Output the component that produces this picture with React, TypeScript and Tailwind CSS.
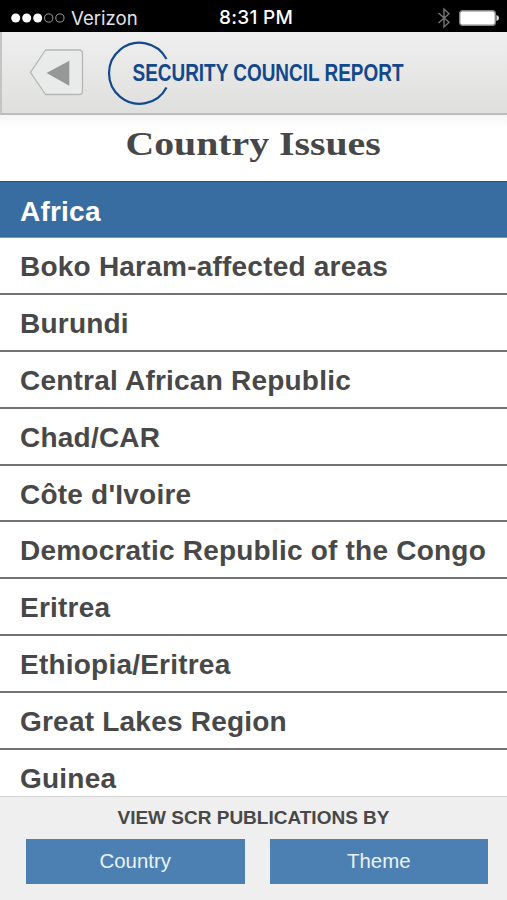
const countries = [
  "Boko Haram-affected areas",
  "Burundi",
  "Central African Republic",
  "Chad/CAR",
  "Côte d'Ivoire",
  "Democratic Republic of the Congo",
  "Eritrea",
  "Ethiopia/Eritrea",
  "Great Lakes Region",
  "Guinea",
];

function StatusBar() {
  return (
    <div className="grid h-8 shrink-0 grid-cols-[1fr_auto_1fr] items-center bg-black pt-[3px] pr-[8px] pl-[11px] text-[18.6px] leading-[30px] text-[#e4e4e4]">
      <div className="flex items-center">
        <svg width="54" height="10" viewBox="0 0 54 10" className="mr-[6px]">
          <circle cx="4.7" cy="5" r="4.5" fill="#fff" />
          <circle cx="15.7" cy="5" r="4.5" fill="#fff" />
          <circle cx="26.7" cy="5" r="4.5" fill="#fff" />
          <circle cx="37.7" cy="5" r="4.1" fill="none" stroke="#aaa" strokeWidth="0.9" />
          <circle cx="48.9" cy="5" r="4.1" fill="none" stroke="#aaa" strokeWidth="0.9" />
        </svg>
        <span>Verizon</span>
      </div>
      <span className="pl-[2px] text-[19px] font-medium tracking-[0.3px] text-white">8:31 PM</span>
      <div className="flex items-center justify-end">
        <svg width="14" height="22" viewBox="0 0 14 22" className="mr-[8px]">
          <path d="M1.5 6 L12 15.3 L7 20 V2 L12 6.7 L1.5 16" fill="none" stroke="#777" strokeWidth="1.4" />
        </svg>
        <svg width="40" height="16" viewBox="0 0 40 16">
          <rect x="0.7" y="0.7" width="35.6" height="14.6" rx="2.8" fill="#fff" stroke="#858585" strokeWidth="1.4" />
          <path d="M37.4 5 Q40 5.5 40 8 Q40 10.5 37.4 11 Z" fill="#ddd" />
        </svg>
      </div>
    </div>
  );
}

function Header() {
  return (
    <header className="flex h-[83px] shrink-0 items-center border-b-2 border-l-2 border-b-[#bdbdbc] border-l-[#c4c4c4] bg-linear-to-b from-[#efefef] to-[#dfdfde] pl-[26px]">
      <button aria-label="Back">
        <svg width="56" height="50" viewBox="0 0 56 50">
          <path
            d="M17.5 2 H51 Q54.5 2 54.5 5.5 V43 Q54.5 46.5 51 46.5 H17.5 L2.5 24.3 Z"
            fill="#e9ebeb"
            stroke="#b5b6b6"
            strokeWidth="1.3"
            strokeLinejoin="round"
          />
          <path d="M18.5 25 L41.3 12.7 V37.7 Z" fill="#969897" />
        </svg>
      </button>
      <svg width="320" height="66" viewBox="0 0 320 66" className="ml-[23px] overflow-visible">
        <path d="M59.5 19 A30.5 30.5 0 1 0 59.5 47.5" fill="none" stroke="#13488b" strokeWidth="2.2" />
        <text
          x="25.5"
          y="41.3"
          textLength="271"
          lengthAdjust="spacingAndGlyphs"
          fontFamily="'Liberation Sans', Arial, sans-serif"
          fontSize="24.5"
          fontWeight="700"
          fill="#13488b"
        >
          SECURITY COUNCIL REPORT
        </text>
      </svg>
    </header>
  );
}

export default function App() {
  return (
    <div className="flex h-[900px] w-[507px] flex-col overflow-hidden bg-white font-['Liberation_Sans',Arial,sans-serif]">
      <div className="font-[Inter,sans-serif]">
        <StatusBar />
      </div>
      <Header />
      <h1 className="flex h-[66px] shrink-0 justify-center bg-linear-to-b from-[#f5f5f5] to-white to-20% pt-[9px] font-['Liberation_Serif',serif] text-[34px] leading-[40px] font-bold text-[#474747]">
        <span className="inline-block scale-x-[1.17]">Country Issues</span>
      </h1>

      <main className="min-h-0 flex-1 overflow-hidden text-[28px] leading-[54px] font-bold tracking-[0.22px] text-[#484848]">
        <h2 className="h-[57px] border-t-[1.5px] border-b border-t-[#444d55] border-b-[#7797bb] bg-[#386da1] pt-[3px] pl-5 text-white">
          Africa
        </h2>
        <ul>
          {countries.map((name) => (
            <li key={name} className="h-[56.9px] border-b-2 border-[#737373] pt-[2px] pl-5">
              {name}
            </li>
          ))}
        </ul>
      </main>

      <footer className="h-[104px] shrink-0 border-t border-[#d2d2d2] bg-[#efefef] pr-[19px] pl-[26px]">
        <p className="pt-[10px] pr-[7px] text-center text-[19px] leading-[22px] font-bold text-[#484848]">
          VIEW SCR PUBLICATIONS BY
        </p>
        <div className="mt-[10px] grid grid-cols-2 gap-[25px] text-[20.4px] text-[#eaf3fc]">
          <button className="h-[45px] bg-[#4c80b3]">Country</button>
          <button className="h-[45px] bg-[#4c80b3]">Theme</button>
        </div>
      </footer>
    </div>
  );
}
